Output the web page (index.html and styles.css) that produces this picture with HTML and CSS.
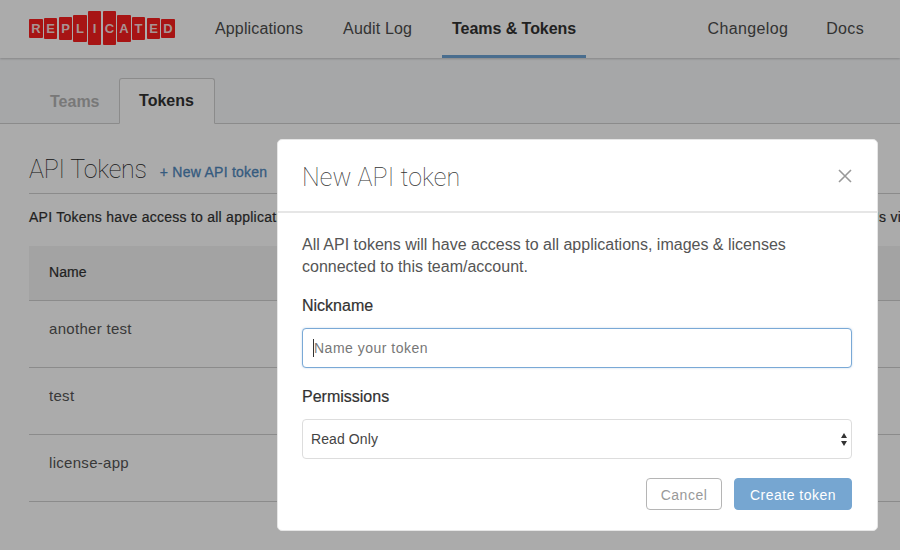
FILE: index.html
```html
<!DOCTYPE html>
<html lang="en">
<head>
	<meta charset="UTF-8">
	<title>API Tokens</title>
	<link rel="stylesheet" href="styles.css">
</head>

<body>
	<header class="topbar">
		<svg class="logo" width="147" height="36" viewBox="0 0 147 36" role="img" aria-label="Replicated">
			<g fill="#f91e1e">
				<rect x="0" y="8" width="14" height="19" rx="1"/>
				<rect x="15" y="7" width="13" height="21" rx="1"/>
				<rect x="30" y="6" width="13" height="23" rx="1"/>
				<rect x="44" y="4" width="14" height="27" rx="1"/>
				<rect x="59" y="0" width="13" height="34" rx="1"/>
				<rect x="74" y="0" width="13" height="34" rx="1"/>
				<rect x="88" y="4" width="14" height="27" rx="1"/>
				<rect x="103" y="6" width="13" height="23" rx="1"/>
				<rect x="118" y="7" width="13" height="21" rx="1"/>
				<rect x="132" y="8" width="14" height="19" rx="1"/>
			</g>
			<g class="logo_text" text-anchor="middle">
				<text x="7" y="22">R</text>
				<text x="21.500" y="22">E</text>
				<text x="36.500" y="22">P</text>
				<text x="51" y="22">L</text>
				<text x="65.500" y="22">I</text>
				<text x="80.500" y="22">C</text>
				<text x="95" y="22">A</text>
				<text x="109.500" y="22">T</text>
				<text x="124.500" y="22">E</text>
				<text x="139" y="22">D</text>
			</g>
		</svg>
		<nav class="nav">
			<a class="nav_item">Applications</a>
			<a class="nav_item">Audit Log</a>
			<a class="nav_item nav_active">Teams &amp; Tokens</a>
		</nav>
		<nav class="nav nav_right">
			<a class="nav_item">Changelog</a>
			<a class="nav_item">Docs</a>
		</nav>
	</header>

	<div class="tabs">
		<a class="tab">Teams</a>
		<a class="tab tab_active">Tokens</a>
	</div>

	<main class="content">
		<div class="title_row">
			<h2 class="title">API Tokens</h2>
			<a class="new_link">+ New API token</a>
		</div>
		<p class="intro">API Tokens have access to all applications, images &amp; licenses connected to this team/account. Use these to call all of our public APIs via the API.</p>
		<table class="token_table">
			<thead>
				<tr><th>Name</th></tr>
			</thead>
			<tbody>
				<tr><td>another test</td></tr>
				<tr><td>test</td></tr>
				<tr><td>license-app</td></tr>
			</tbody>
		</table>
	</main>

	<div class="backdrop"></div>

	<section class="modal">
		<div class="modal_head">
			<h3 class="modal_title">New API token</h3>
			<svg class="close" width="14" height="14" viewBox="0 0 14 14" aria-label="Close">
				<path d="M1 1 L13 13 M13 1 L1 13"/>
			</svg>
		</div>
		<div class="modal_body">
			<p class="modal_text">All API tokens will have access to all applications, images &amp; licenses connected to this team/account.</p>
			<label class="field_label">Nickname</label>
			<div class="input_wrap">
				<input class="field field_focus" type="text" placeholder="Name your token">
				<span class="caret"></span>
			</div>
			<label class="field_label">Permissions</label>
			<div class="select_wrap">
				<select class="field field_select">
					<option>Read Only</option>
				</select>
				<span class="arrows"></span>
			</div>
			<div class="actions">
				<button class="btn btn_cancel">Cancel</button>
				<button class="btn btn_create">Create token</button>
			</div>
		</div>
	</section>
</body>
</html>
```

FILE: styles.css
```css
* {margin:0; padding:0; box-sizing:border-box;}
html, body {height:550px; overflow:hidden;}
body {background:#fff; color:#323232; font:14px/1.5 "Liberation Sans",Arial,sans-serif; width:900px;}

.topbar {display:flex; align-items:stretch; height:58px; padding-left:29px; background:#fff; box-shadow:0 1px 2px rgba(0,0,0,.2); position:relative; z-index:1;}
.logo {margin:11px 19px 0 0; flex:none;}
.logo_text {fill:#fbdcdc; font:bold 13px "Liberation Sans",Arial,sans-serif;}
.nav {display:flex;}
.nav_right {margin-left:auto; padding-right:17px;}
.nav_item {display:block; height:58px; padding:0 10px; margin:0 10px; font-size:16px; letter-spacing:.15px; line-height:57px; color:#4d4d4d; white-space:nowrap;}
.nav_right .nav_item {margin:0 9px; letter-spacing:.35px;}
.nav_active {font-weight:bold; letter-spacing:-.05px; color:#323232; border-bottom:3px solid #6ea3d4;}

.tabs {display:flex; align-items:flex-end; height:66px; padding-left:29px; background:#f8f9fb; border-bottom:1px solid #d0d0d0;}
.tab {display:block; height:45px; padding:0 19px 0 21px; font-size:16px; font-weight:bold; line-height:48px; color:#b4b4b4;}
.tab_active {width:96px; margin-bottom:-1px; padding:0; height:46px; line-height:44px; text-align:center; color:#323232; background:#fff; border:1px solid #d0d0d0; border-bottom-color:#fff; border-radius:3px 3px 0 0;}

.content {padding:0 0 0 29px;}
.title_row {display:flex; align-items:flex-start; height:70px; border-bottom:1px solid #d0d0d0; padding-top:28px;}
.title {font:100 25px/36px Roboto,"Liberation Sans",sans-serif; letter-spacing:-.2px; color:#222;}
.new_link {margin:10px 0 0 13px; font-size:14px; letter-spacing:.25px; color:#4f88bd; -webkit-text-stroke:.3px currentColor;}
.intro {height:52px; padding-top:14px; font-size:14px; line-height:18px; letter-spacing:.25px; white-space:nowrap; -webkit-text-stroke:.2px currentColor;}

.token_table {width:100%; border-collapse:collapse;}
.token_table th {height:54px; padding-left:20px; text-align:left; font-weight:normal; letter-spacing:.1px; background:#f3f3f3; border-bottom:1px solid #d0d0d0; -webkit-text-stroke:.2px currentColor;}
.token_table td {height:67px; padding:0 0 9px 20px; font-size:15px; letter-spacing:.3px; border-bottom:1px solid #d0d0d0; color:#555;}

.backdrop {position:fixed; left:0; top:0; right:0; bottom:0; z-index:2; background:rgba(0,0,0,.33);}

.modal {position:fixed; left:277px; top:139px; z-index:3; width:601px; height:392px; background:#fff; border:1px solid #e6e6e6; border-radius:5px;}
.modal_head {display:flex; align-items:center; justify-content:space-between; height:73px; padding:0 25px 0 24px; border-bottom:2px solid #e6e6e6;}
.modal_title {padding-top:4px; font:100 25px/36px Roboto,"Liberation Sans",sans-serif; letter-spacing:.1px; color:#333;}
.close {fill:none; stroke:#999; stroke-width:1.6;}
.modal_body {padding:21px 25px 0 24px;}
.modal_text {font-size:16px; line-height:22px; color:#555;}
.field_label {display:block; margin-top:17px; font-size:16px; line-height:22px; color:#323232; -webkit-text-stroke:.2px currentColor;}

.input_wrap, .select_wrap {position:relative; margin-top:11px;}
.input_wrap {margin-bottom:18px;}
.input_wrap + .field_label {margin-top:18px;}
.field {display:block; width:100%; height:40px; font:14px "Liberation Sans",Arial,sans-serif; letter-spacing:.5px; background:#fff; border:1px solid #ddd; border-radius:4px; outline:none; color:#444;}
.field_focus {padding-left:11px; border-color:#7aa9d6; box-shadow:0 0 2px rgba(122,169,214,.5);}
.field_focus::placeholder {color:#777; opacity:1;}
.field_select {appearance:none; padding-left:8px; letter-spacing:.1px;}
.caret {position:absolute; left:11px; top:11px; width:1px; height:18px; background:#333;}
.arrows {position:absolute; right:4px; top:14px; width:7px; height:13px;}
.arrows:before, .arrows:after {content:""; position:absolute; left:0; border-left:3.5px solid transparent; border-right:3.5px solid transparent;}
.arrows:before {top:0; border-bottom:5px solid #333;}
.arrows:after {bottom:0; border-top:5px solid #333;}

.actions {display:flex; justify-content:flex-end; gap:12px; margin-top:19px;}
.btn {height:32px; padding-top:1px; font:14px "Liberation Sans",Arial,sans-serif; letter-spacing:.5px; border-radius:4px;}
.btn_cancel {width:76px; background:#fff; border:1px solid #b5b5b5; color:#999;}
.btn_create {width:118px; background:#76a6d1; border:1px solid #76a6d1; color:#fff;}
```
